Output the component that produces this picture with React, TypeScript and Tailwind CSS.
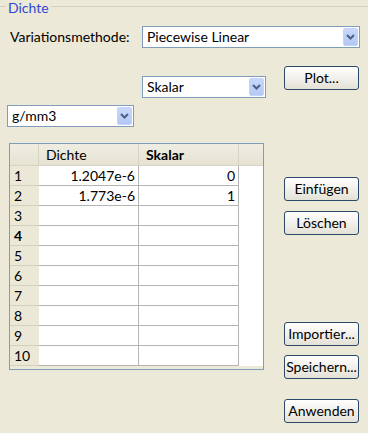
import React from "react";

const font = { fontFamily: "Lato, 'Open Sans', sans-serif" };

function Combo({ value, className }: { value: string; className: string }) {
  return (
    <div className={`flex items-center bg-white border border-[#7f9db9] h-[22px] ${className}`}>
      <span className="flex-1 pl-[4px] text-[14px] leading-[18px] text-black whitespace-nowrap">{value}</span>
      <div className="mr-[1px] w-[15px] h-[18px] rounded-[2px] border border-[#c3d3fd] bg-gradient-to-b from-[#c8d8fb] to-[#b3c8f5] flex items-center justify-center">
        <svg width="9" height="6" viewBox="0 0 9 6">
          <path d="M1 1 L4.5 4.5 L8 1" stroke="#4d6185" strokeWidth="2" fill="none" />
        </svg>
      </div>
    </div>
  );
}

function XpButton({ label, className = "" }: { label: string; className?: string }) {
  return (
    <button className={`w-[75px] h-[24px] rounded-[3px] border border-[#2b4868] bg-gradient-to-b from-white to-[#e4e1d6] text-[14px] leading-[18px] text-black flex items-center justify-center ${className}`}>
      {label}
    </button>
  );
}

const rows = [
  ["1", "1.2047e-6", "0"],
  ["2", "1.773e-6", "1"],
  ["3", "", ""],
  ["4", "", ""],
  ["5", "", ""],
  ["6", "", ""],
  ["7", "", ""],
  ["8", "", ""],
  ["9", "", ""],
  ["10", "", ""],
];

function Table() {
  return (
    <div className="w-[255px] h-[227px] border border-[#7f9db9] bg-[#ece9d8] flex flex-col">
      <div className="flex h-[22px] bg-gradient-to-b from-[#efede2] to-[#e6e3d4] border-b border-[#d6d3c2] text-[14px] leading-[18px]">
        <div className="w-[29px] border-r border-[#d6d3c2]" />
        <div className="w-[100px] border-r border-[#d6d3c2] flex items-center pl-[7px]">Dichte</div>
        <div className="w-[100px] border-r border-[#d6d3c2] flex items-center pl-[7px] font-bold">Skalar</div>
        <div className="flex-1" />
      </div>
      {rows.map(([n, a, b]) => (
        <div key={n} className="flex h-[20px] text-[14px] leading-[18px]">
          <div className={`w-[29px] bg-[#ebe8d8] border-b border-[#d3d0bd] flex items-center pl-[4px] ${n === "4" ? "font-bold" : ""}`}>
            {n}
          </div>
          <div className="w-[100px] bg-white border-r border-b border-[#b4b4b4] flex items-center justify-end pr-[3px]">{a}</div>
          <div className="w-[100px] bg-white border-r border-b border-[#b4b4b4] flex items-center justify-end pr-[3px]">{b}</div>
          <div className="flex-1 bg-white" />
        </div>
      ))}
    </div>
  );
}

export default function App() {
  return (
    <div className="w-[368px] h-[433px] bg-[#ece9d8] overflow-hidden text-black" style={font}>
      <div className="flex items-start h-[14px] pt-[1px]">
        <div className="w-[6px] mt-[5px] border-t border-[#d0d0bf]" />
        <span className="px-[2px] text-[14px] leading-[13px] text-[#3048d0]">Dichte</span>
        <div className="flex-1 mt-[5px] border-t border-[#d0d0bf]" />
      </div>

      <div className="flex items-center mt-[12px]">
        <span className="w-[142px] pl-[10px] text-[14px] leading-[18px]">Variationsmethode:</span>
        <Combo value="Piecewise Linear" className="w-[218px]" />
      </div>

      <div className="flex items-start mt-[18px]">
        <Combo value="Skalar" className="ml-[142px] mt-[10px] w-[124px]" />
        <XpButton label="Plot..." className="ml-[18px]" />
      </div>

      <div className="flex mt-[7px]">
        <Combo value="g/mm3" className="ml-[7px] w-[127px]" />
      </div>

      <div className="flex mt-[16px]">
        <div className="ml-[9px]">
          <Table />
        </div>
        <div className="ml-[20px] flex flex-col">
          <XpButton label="Einfügen" className="mt-[34px]" />
          <XpButton label="Löschen" className="mt-[10px]" />
          <XpButton label="Importier..." className="mt-[87px]" />
          <XpButton label="Speichern..." className="mt-[9px]" />
          <XpButton label="Anwenden" className="mt-[20px]" />
        </div>
      </div>
    </div>
  );
}
